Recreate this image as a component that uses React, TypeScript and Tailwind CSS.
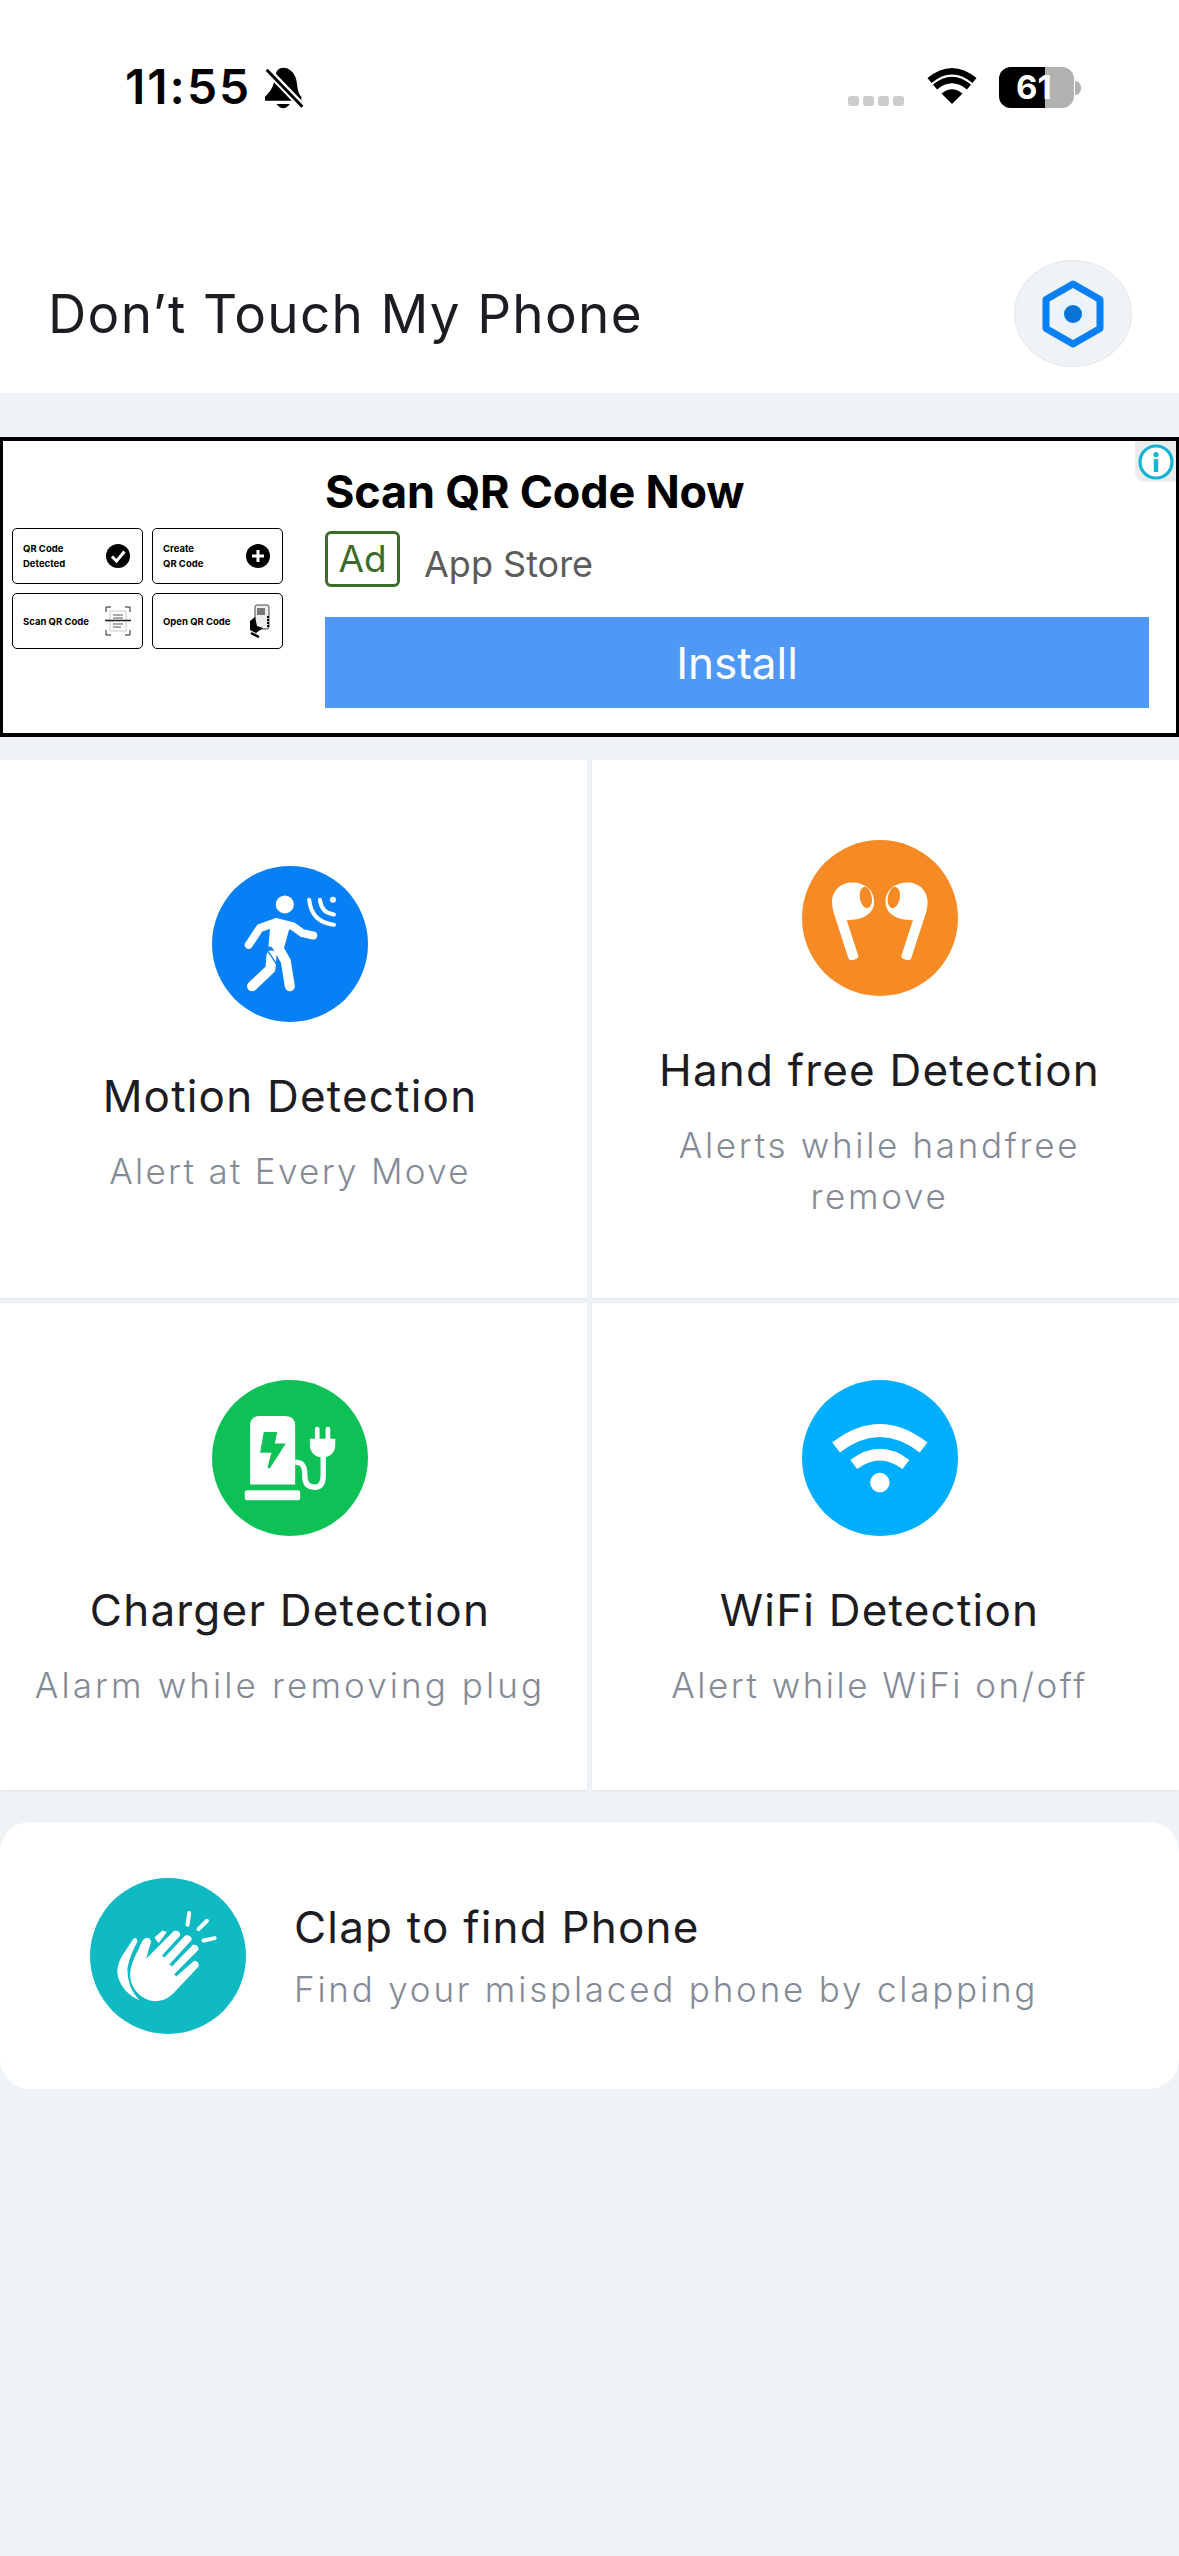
import React from "react";

const Title = "font-['Inter',sans-serif] text-[#1c1c22] text-[44px] leading-[52px] tracking-[1.2px]";
const Sub = "font-['Inter',sans-serif] font-light text-[#858b96] text-[35px] leading-[51px]";

function Circle({ color, children, box }: { color: string; children: React.ReactNode; box: string }) {
  return (
    <svg viewBox={box} className="w-[156px] h-[156px] shrink-0">
      <circle cx={Number(box.split(" ")[0]) + 233.5} cy={Number(box.split(" ")[1]) + 233.5} r="233.5" fill={color} />
      {children}
    </svg>
  );
}

function MotionIcon() {
  return (
    <Circle color="#0780f5" box="97 77 467 467">
      <circle cx="315" cy="192" r="27" fill="#fff" />
      <path d="M207 313 L240 263 L290 245 L340 258 L368 278 L400 285" stroke="#fff" strokeWidth="24" strokeLinecap="round" strokeLinejoin="round" fill="none" />
      <path d="M272 250 L332 252 L312 325 L266 318 Z" fill="#fff" />
      <path d="M288 310 L318 362 L330 437" stroke="#fff" strokeWidth="30" strokeLinecap="round" strokeLinejoin="round" fill="none" />
      <path d="M275 345 L272 385 L217 437" stroke="#fff" strokeWidth="30" strokeLinecap="round" strokeLinejoin="round" fill="none" />
      <path d="M266 334 L292 374" stroke="#0780f5" strokeWidth="4" fill="none" />
      <circle cx="459" cy="178" r="9" fill="#fff" />
      <path d="M420 178 Q425 218 462 222" stroke="#fff" strokeWidth="12" strokeLinecap="round" fill="none" />
      <path d="M388 178 Q395 245 462 253" stroke="#fff" strokeWidth="12" strokeLinecap="round" fill="none" />
    </Circle>
  );
}

const budPath = "M156 245 C156 210 185 187 215 187 C255 187 282 210 282 245 C282 280 250 300 200 300 L234 405 Q236 413 228 416 L215 420 Q208 421 205 414 L160 275 Q156 260 156 245 Z";

function BudsIcon() {
  return (
    <Circle color="#f68a24" box="66 60 467 467">
      <path d={budPath} fill="#fff" />
      <ellipse cx="257" cy="232" rx="18" ry="32" transform="rotate(-10 257 232)" fill="#f68a24" />
      <g transform="translate(598 0) scale(-1 1)">
        <path d={budPath} fill="#fff" />
        <ellipse cx="257" cy="232" rx="18" ry="32" transform="rotate(-10 257 232)" fill="#f68a24" />
      </g>
    </Circle>
  );
}

function ChargerIcon() {
  return (
    <Circle color="#0dc156" box="67 60 467 467">
      <path d="M181 373 L181 198 Q181 168 211 168 L286 168 Q316 168 316 198 L316 373 Z" fill="#fff" />
      <rect x="165" y="390" width="166" height="30" rx="7" fill="#fff" />
      <path d="M222 216 L262 216 L255 250 L288 250 L240 325 L233 322 L245 278 L211 278 Z" fill="#0dc156" />
      <path d="M316 306 C345 306 345 330 345 350 C345 375 360 381 375 381 C395 381 400 365 400 345 L400 285" stroke="#fff" strokeWidth="16" fill="none" />
      <rect x="375" y="200" width="14" height="44" rx="7" fill="#fff" />
      <rect x="407" y="200" width="14" height="44" rx="7" fill="#fff" />
      <path d="M360 236 L436 236 L436 255 C436 275 420 292 398 292 C376 292 360 275 360 255 Z" fill="#fff" />
    </Circle>
  );
}

function WifiIcon() {
  return (
    <Circle color="#00aeff" box="66 60 467 467">
      <circle cx="299" cy="367" r="29" fill="#fff" />
      <path d="M168 262 Q299 160 430 262" stroke="#fff" strokeWidth="38" fill="none" />
      <path d="M221 313 Q299 254 377 313" stroke="#fff" strokeWidth="34" fill="none" />
    </Circle>
  );
}

function ClapIcon() {
  return (
    <Circle color="#0fbac3" box="60 50 467 467">
      <path d="M228 292 L243 240 Q238 225 225 230 Q215 235 205 265 C180 310 170 350 195 385 C225 425 275 430 310 395 L385 315 Q388 300 372 298 L318 345 L312 338 L385 265 Q385 248 368 250 L305 315 L298 308 L365 235 Q362 218 345 222 L283 288 L275 283 L330 222 Q330 205 312 208 Z" fill="#fff" />
      <path d="M253 228 L277 207 L290 212 L265 245 Z" fill="#fff" />
      <path d="M190 232 Q200 225 202 240 Q180 280 172 320 Q170 375 208 417 Q160 395 145 350 Q135 320 155 285 Z" fill="#fff" />
      <path d="M357 155 L352 190 M410 178 L385 203 M400 237 L433 230" stroke="#fff" strokeWidth="12" strokeLinecap="round" fill="none" />
    </Circle>
  );
}

function BellOff() {
  return (
    <svg viewBox="490 110 118 130" className="w-[39px] h-[43px] ml-[14px] mt-[2px]">
      <path d="M545 112 C530 112 522 125 520 140 C517 170 505 185 490 200 L490 212 L600 212 L600 200 C585 185 590 160 582 140 C575 122 560 112 545 112 Z" fill="#000" />
      <path d="M525 222 Q545 248 565 222 Z" fill="#000" />
      <path d="M490 112 L605 232" stroke="#fff" strokeWidth="22" />
      <path d="M495 118 L603 230" stroke="#000" strokeWidth="9" />
    </svg>
  );
}

function TopWifi() {
  return (
    <svg viewBox="0 0 50 37" className="w-[50px] h-[37px]">
      <path d="M25 37 L14.5 26.5 Q25 18 35.5 26.5 Z" fill="#000" />
      <path d="M8 20 Q25 6 42 20" stroke="#000" strokeWidth="6.5" fill="none" />
      <path d="M2.5 11.5 Q25 -7 47.5 11.5" stroke="#000" strokeWidth="6.5" fill="none" transform="translate(0 2)" />
    </svg>
  );
}

function SettingsIcon() {
  return (
    <svg viewBox="0 0 62 68" className="w-[62px] h-[68px]">
      <path d="M31 4 L58 19.5 L58 48.5 L31 64 L4 48.5 L4 19.5 Z" fill="none" stroke="#0780f5" strokeWidth="7" strokeLinejoin="round" />
      <circle cx="31" cy="34" r="15" fill="#e6f2ff" />
      <circle cx="31" cy="34" r="9" fill="#0673d6" />
    </svg>
  );
}

function Thumb({ children, lines }: { children: React.ReactNode; lines: string[] }) {
  return (
    <div className="w-[131px] h-[56px] border border-black rounded-[5px] flex items-center justify-between pl-[10px] pr-[11px]">
      <div className="font-['Inter',sans-serif] font-bold text-[9.5px] leading-[15px] text-black whitespace-nowrap">
        {lines.map((l) => (
          <div key={l}>{l}</div>
        ))}
      </div>
      {children}
    </div>
  );
}

function Card({ icon, title, sub, cls, subCls }: { icon: React.ReactNode; title: string; sub: string[]; cls: string; subCls: string }) {
  return (
    <div className={`bg-white flex flex-col items-center shadow-[0_1px_2px_rgba(0,0,0,0.06)] ${cls}`}>
      {icon}
      <div className={`${Title} mt-[48px] whitespace-nowrap`}>{title}</div>
      <div className={`${Sub} ${subCls} mt-[24px] text-center whitespace-nowrap`}>
        {sub.map((s) => (
          <div key={s}>{s}</div>
        ))}
      </div>
    </div>
  );
}

export default function App() {
  return (
    <div className="w-[1179px] h-[2556px] bg-[#f0f3f6] overflow-hidden flex flex-col font-['Inter',sans-serif]">
      <header className="bg-white h-[393px] shrink-0 flex flex-col">
        <div className="flex items-start justify-between pt-[62px] pl-[125px] pr-[98px] h-[260px]">
          <div className="flex items-center">
            <span className="text-[48px] leading-[50px] font-semibold text-black tracking-[2px]">11:55</span>
            <BellOff />
          </div>
          <div className="flex items-start pt-[5px]">
            <div className="flex gap-[4px] mt-[29px] mr-[23px]">
              <i className="block w-[11px] h-[10px] rounded-[3px] bg-[#cccccc]" />
              <i className="block w-[11px] h-[10px] rounded-[3px] bg-[#cccccc]" />
              <i className="block w-[11px] h-[10px] rounded-[3px] bg-[#cccccc]" />
              <i className="block w-[11px] h-[10px] rounded-[3px] bg-[#cccccc]" />
            </div>
            <TopWifi />
            <div className="flex items-center ml-[22px]">
              <div className="w-[75px] h-[41px] rounded-[12px] overflow-hidden bg-[#b2b2b2] relative flex items-center">
                <div className="w-[46px] h-full bg-black" />
                <span className="absolute left-[17px] top-0 leading-[41px] text-[33px] font-bold text-white">61</span>
              </div>
              <div className="w-[6px] h-[14px] bg-[#b2b2b2] rounded-r-[6px] ml-[1px]" />
            </div>
          </div>
        </div>
        <div className="h-[107px] flex items-center justify-between pl-[48px] pr-[47px]">
          <h1 className="text-[53px] leading-[60px] text-[#1c1c22] tracking-[1.3px] whitespace-nowrap">Don’t Touch My Phone</h1>
          <button className="w-[118px] h-[107px] rounded-[50%] bg-[#f0f3f6] border border-[#e4e7eb] flex items-center justify-center">
            <SettingsIcon />
          </button>
        </div>
      </header>
      <main className="flex flex-col">
        <section className="mt-[44px] h-[300px] border-y-[4px] border-x-[3px] border-black bg-white relative flex">
          <div className="w-[322px] shrink-0 pl-[9px] pt-[87px] flex flex-col gap-[9px]">
            <div className="flex gap-[9px]">
              <Thumb lines={["QR Code", "Detected"]}>
                <svg viewBox="0 0 24 24" className="w-[24px] h-[24px] mr-[1px]">
                  <circle cx="12" cy="12" r="12" fill="#000" />
                  <path d="M6 12.5 L10.5 17 L18.5 7.5" stroke="#fff" strokeWidth="3" fill="none" />
                </svg>
              </Thumb>
              <Thumb lines={["Create", "QR Code"]}>
                <svg viewBox="0 0 24 24" className="w-[24px] h-[24px] mr-[1px]">
                  <circle cx="12" cy="12" r="12" fill="#000" />
                  <path d="M12 6 V18 M6 12 H18" stroke="#fff" strokeWidth="3" fill="none" />
                </svg>
              </Thumb>
            </div>
            <div className="flex gap-[9px]">
              <Thumb lines={["Scan QR Code"]}>
                <svg viewBox="0 0 26 30" className="w-[26px] h-[30px]" fill="none" stroke="#222" strokeWidth="1">
                  <path d="M1 6 V1 H6 M20 1 H25 V6 M1 24 V29 H6 M20 29 H25 V24" />
                  <path d="M5 5 H21 V25 H5 Z" stroke="#ccc" />
                  <path d="M0 14.5 H26" strokeWidth="1.6" />
                  <path d="M8 9 H18 M8 12 H18 M8 18 H18 M8 21 H16" stroke="#555" />
                </svg>
              </Thumb>
              <Thumb lines={["Open QR Code"]}>
                <svg viewBox="0 0 22 34" className="w-[22px] h-[34px]">
                  <rect x="6" y="1" width="14" height="24" rx="2" fill="#eee" stroke="#444" strokeWidth="1" />
                  <path d="M8 4 H16 V11 H8 Z" fill="#777" />
                  <path d="M1 17 L6 13 L8 22 L14 24 L7 29 L1 26 Z" fill="#000" />
                  <path d="M2 29 L10 33" stroke="#000" strokeWidth="2.5" />
                  <path d="M19 12 V23" stroke="#000" strokeWidth="2" strokeDasharray="2 1" />
                </svg>
              </Thumb>
            </div>
          </div>
          <div className="flex flex-col flex-1 pr-[27px]">
            <div className="text-[45px] leading-[54px] font-bold text-black mt-[24px] tracking-[-0.2px] whitespace-nowrap">Scan QR Code Now</div>
            <div className="flex items-center mt-[6px]">
              <div className="w-[75px] h-[56px] border-[3px] border-[#3e6b2a] rounded-[6px] flex items-center justify-center text-[37px] text-[#3e6b2a]">Ad</div>
              <div className="ml-[24px] text-[36px] leading-[56px] mt-[11px] text-[#5c5c5c]">App Store</div>
            </div>
            <div className="mt-[25px] h-[91px] bg-[#4f98f6] flex items-center justify-center text-[44px] text-white">Install</div>
          </div>
          <div className="absolute right-0 top-0 w-[41px] h-[41px] bg-[#ececec] rounded-bl-[10px] flex items-center justify-center">
            <svg viewBox="0 0 36 36" className="w-[36px] h-[36px]">
              <circle cx="18" cy="18" r="16" fill="#fff" stroke="#0fb5d4" strokeWidth="3.2" />
              <circle cx="18" cy="10.5" r="2.6" fill="#0fb5d4" />
              <rect x="15.8" y="15" width="4.4" height="13" fill="#0fb5d4" />
            </svg>
          </div>
        </section>
        <section className="mt-[23px] grid grid-cols-[587px_587px] gap-[5px]">
          <Card icon={<MotionIcon />} title="Motion Detection" sub={["Alert at Every Move"]} cls="h-[538px] pt-[106px] pr-[7px]" subCls="tracking-[2.3px]" />
          <Card icon={<BudsIcon />} title="Hand free Detection" sub={["Alerts while handfree", "remove"]} cls="h-[538px] pt-[80px] pr-[12px]" subCls="tracking-[2.7px]" />
          <Card icon={<ChargerIcon />} title="Charger Detection" sub={["Alarm while removing plug"]} cls="h-[487px] pt-[77px] pr-[7px]" subCls="tracking-[3.1px]" />
          <Card icon={<WifiIcon />} title="WiFi Detection" sub={["Alert while WiFi on/off"]} cls="h-[487px] pt-[77px] pr-[12px]" subCls="tracking-[2.5px]" />
        </section>
        <section className="mt-[32px] h-[267px] bg-white rounded-[30px] flex items-center pl-[90px]">
          <ClapIcon />
          <div className="ml-[48px] mt-[4px]">
            <div className={Title}>Clap to find Phone</div>
            <div className={`${Sub} tracking-[2.8px] mt-[11px] whitespace-nowrap`}>Find your misplaced phone by clapping</div>
          </div>
        </section>
      </main>
    </div>
  );
}
